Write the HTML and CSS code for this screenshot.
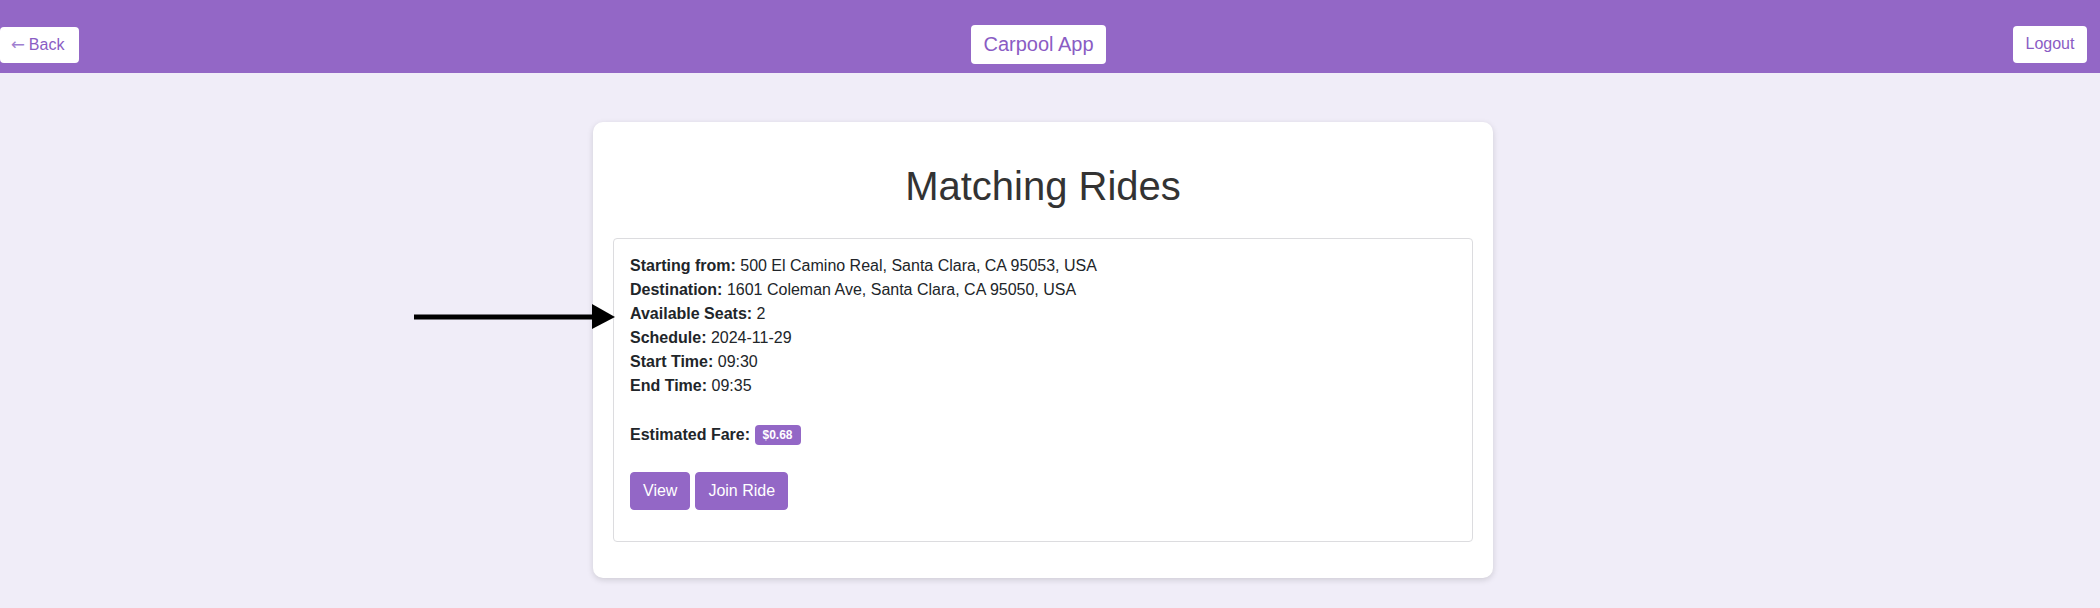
FILE: index.html
```html
<!DOCTYPE html>
<html lang="en">
<head>
<meta charset="utf-8">
<title>Carpool App - Matching Rides</title>
<link rel="stylesheet" href="styles.css">
</head>
<body>
  <header class="topbar">
    <button class="nav-btn back-btn"><span class="back-arrow">←</span> Back</button>
    <div class="brand">Carpool App</div>
    <button class="nav-btn logout-btn">Logout</button>
  </header>

  <main class="page">
    <section class="card">
      <h1 class="title">Matching Rides</h1>
      <div class="ride">
        <div class="ride-info">
          <div><strong>Starting from:</strong> 500 El Camino Real, Santa Clara, CA 95053, USA</div>
          <div><strong>Destination:</strong> 1601 Coleman Ave, Santa Clara, CA 95050, USA</div>
          <div><strong>Available Seats:</strong> 2</div>
          <div><strong>Schedule:</strong> 2024-11-29</div>
          <div><strong>Start Time:</strong> 09:30</div>
          <div><strong>End Time:</strong> 09:35</div>
        </div>
        <p class="fare"><strong>Estimated Fare:</strong> <span class="badge">$0.68</span></p>
        <div class="actions">
          <button class="btn">View</button>
          <button class="btn">Join Ride</button>
        </div>
      </div>
    </section>
  </main>

  <svg class="pointer" width="210" height="34" viewBox="0 0 210 34" aria-hidden="true">
    <rect x="4" y="14.5" width="180" height="5" fill="#000"/>
    <polygon points="182,4 205,17 182,29" fill="#000"/>
  </svg>
</body>
</html>
```

FILE: styles.css
```css
html, body {
  margin: 0;
  padding: 0;
}

body {
  background: #f0edf8;
  font-family: "Liberation Sans", Arial, sans-serif;
  color: #212529;
  font-size: 16px;
  line-height: 1.5;
  min-height: 608px;
  position: relative;
}

.topbar {
  background: #9367c6;
  height: 73px;
  box-sizing: border-box;
  padding: 25px 13px 9px 0;
  display: flex;
  align-items: center;
  justify-content: space-between;
}

.nav-btn {
  font-family: "Liberation Sans", Arial, sans-serif;
  background: #fff;
  color: #8a5cc4;
  border: none;
  border-radius: 4px;
  font-size: 16px;
  line-height: 18px;
  padding: 9px 12px;
  margin: 0;
  white-space: nowrap;
  cursor: pointer;
}

.back-btn {
  width: 79px;
  padding-left: 11px;
  padding-right: 8px;
  text-align: left;
}

.back-arrow {
  display: inline-block;
  font-family: "DejaVu Sans", sans-serif;
  font-size: 16px;
  color: #a07fd0;
  transform: scaleX(1.05);
}

.logout-btn {
  width: 74px;
  padding-bottom: 10px;
}

.brand {
  background: #fff;
  color: #8a5cc4;
  border-radius: 4px;
  font-size: 20px;
  line-height: 23px;
  padding: 8px 12px;
  white-space: nowrap;
  margin-right: 15px;
}

.page {
  display: flex;
  justify-content: center;
  padding: 49px 14px 0 0;
}

.card {
  width: 900px;
  box-sizing: border-box;
  background: #fff;
  border-radius: 10px;
  box-shadow: 0 2px 6px rgba(0, 0, 0, 0.14);
  padding: 20px 20px 20px;
}

.title {
  margin: 20px 0 28px;
  font-size: 40px;
  line-height: 48px;
  font-weight: 400;
  color: #333;
  text-align: center;
}

.ride {
  border: 1px solid #dcdcdf;
  border-radius: 4px;
  padding: 15px 16px 16px;
  margin-bottom: 16px;
}

.ride-info {
  line-height: 24px;
}

.ride-info strong,
.fare strong {
  font-weight: 700;
}

.fare {
  margin: 25px 0 25px;
  line-height: 24px;
}

.badge {
  display: inline-block;
  background: #9367c6;
  color: #fff;
  font-size: 12px;
  font-weight: 700;
  line-height: 1;
  padding: 4px 8px;
  border-radius: 4px;
  vertical-align: 1px;
}

.actions {
  display: flex;
  gap: 5px;
  margin-bottom: 15px;
}

.btn {
  font-family: "Liberation Sans", Arial, sans-serif;
  background: #9367c6;
  color: #fff;
  border: 1px solid #9367c6;
  border-radius: 4px;
  font-size: 16px;
  line-height: 24px;
  padding: 6px 12px;
  margin: 0;
  cursor: pointer;
}

.pointer {
  position: absolute;
  left: 410px;
  top: 300px;
}
```
